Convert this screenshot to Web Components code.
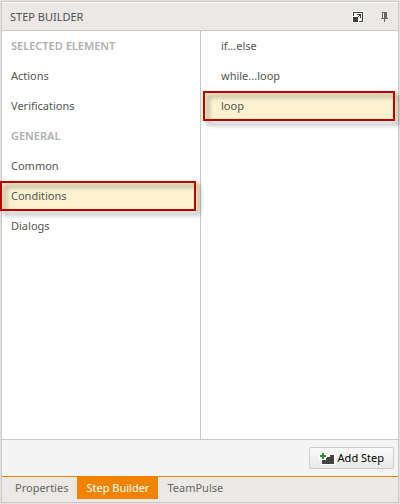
<!DOCTYPE html>
<html lang="en">
<head>
<meta charset="utf-8">
<title>Step Builder</title>
<style>
html, body { height: 100%; margin: 0; }
body { background: #e4e1df; font: 11px/16px "Noto Sans", "Open Sans", sans-serif; color: #555; }
</style>
</head>
<body>
<step-builder></step-builder>
<script>
const define = (name, html, setup) => customElements.define(name, class extends HTMLElement {
  connectedCallback() {
    if (this.shadowRoot) return;
    this.attachShadow({ mode: "open" }).innerHTML = html;
    if (setup) setup(this);
  }
});

define("panel-header", `
<style>
:host { display: flex; align-items: center; height: 27px; padding: 0 10px 0 8px; background: #ebe8e5; border-top: 1px solid #fff; border-bottom: 1px solid #c8c8c8; }
h1 { flex: 1; margin: 0; font-size: 11px; font-weight: 400; line-height: 16px; color: #505050; }
button { display: block; border: 0; padding: 0; background: none; }
button + button { margin-left: 17px; }
svg { display: block; }
</style>
<h1><slot></slot></h1>
<button type="button" aria-label="Undock"><svg width="12" height="12" shape-rendering="crispEdges"><path fill="#fff" d="M0 0h12v12H0z"/><path fill="#404040" d="M1 1h10v10H7v-1h3V2H2v3H1zM1 6h5v5H1zM5 3h4v4H8V5H7V4H5zM6 5h1v1H6z"/></svg></button>
<button type="button" aria-label="Pin"><svg width="7" height="10" shape-rendering="crispEdges"><path fill="#666" d="M1 0h5v6h1v1H4v3H3V7H0V6h1zM2 1v5h1V1z"/></svg></button>`);

define("list-heading", `
<style>
:host { display: block; }
h2 { margin: 0; padding: 7px 9px; font-size: 11px; line-height: 16px; font-weight: 600; color: #b0b0b0; }
</style><h2><slot></slot></h2>`);

define("list-item", `
<style>
:host { display: block; position: relative; }
button { display: block; width: 100%; border: 0; margin: 0; padding: 7px 9px; padding-left: var(--indent, 9px); background: none; font: inherit; color: inherit; text-align: left; }
:host([selected]) button { background: #fcf2cf; }
.mark { display: none; }
:host([selected]) .mark { display: block; position: absolute; z-index: 1; box-sizing: border-box; top: 0; bottom: 0; left: var(--mark-left); right: var(--mark-right); border: 2px solid #c00000; filter: drop-shadow(4px 4px 2px rgba(0,0,0,.4)); pointer-events: none; }
</style><button type="button"><slot></slot></button><span class="mark"></span>`);

define("add-button", `
<style>
:host { display: block; }
button { display: flex; align-items: center; gap: 3px; height: 22px; padding: 0 9px; border: 1px solid #ccc; border-radius: 2px; background: linear-gradient(#fafafa, #e9e9e9); font: inherit; font-size: 11px; color: #000; }
svg { display: block; }
</style>
<button type="button"><svg width="16" height="13" shape-rendering="crispEdges" aria-hidden="true"><path fill="#fff" d="M2 0h4v2h10v11H2V8H0V2h2z"/><path fill="#444" d="M11 3h4v9H3V8h4V5h4z"/><path fill="#fff" d="M2 0h4v2h2v4H6v2H2V6H0V2h2z"/><path fill="#2e8b2e" d="M3 1h2v2h2v2H5v2H3V5H1V3h2z"/></svg><slot></slot></button>`);

define("tab-item", `
<style>
:host { display: block; }
button { height: 22px; border: 0; margin: 0; padding: 0 9px; background: none; font: inherit; color: #666; display: block; }
:host([selected]) button { background: #f08400; color: #fff; }
</style><button type="button" role="tab"><slot></slot></button>`, el =>
  el.shadowRoot.querySelector("button").setAttribute("aria-selected", el.hasAttribute("selected")));

define("step-builder", `
<style>
:host { display: flex; flex-direction: column; box-sizing: border-box; height: 100%; padding: 1px; }
.panel { flex: 1; display: flex; flex-direction: column; border: 1px solid #c8c8c8; background: #fff; }
.columns { flex: 1; display: grid; grid-template-columns: 1fr 1fr; }
.left { --mark-left: -2px; --mark-right: 4px; }
.right { border-left: 1px solid #c8c8c8; --indent: 20px; --mark-left: 2px; --mark-right: 3px; }
.footer { display: flex; justify-content: flex-end; padding: 7px 4px; background: #f4f4f4; border-top: 1px solid #c8c8c8; }
.tabs { display: flex; padding: 0 4px 3px; background: #ebe8e5; border-top: 1px solid #f08400; }
</style>
<section class="panel">
<panel-header>STEP BUILDER</panel-header>
<div class="columns">
<nav class="left">
<list-heading>SELECTED ELEMENT</list-heading>
<list-item>Actions</list-item>
<list-item>Verifications</list-item>
<list-heading>GENERAL</list-heading>
<list-item>Common</list-item>
<list-item selected>Conditions</list-item>
<list-item>Dialogs</list-item>
</nav>
<div class="right">
<list-item>if...else</list-item>
<list-item>while...loop</list-item>
<list-item selected>loop</list-item>
</div>
</div>
<div class="footer"><add-button>Add Step</add-button></div>
<div class="tabs" role="tablist"><tab-item>Properties</tab-item><tab-item selected>Step Builder</tab-item><tab-item>TeamPulse</tab-item></div>
</section>`);
</script>
</body>
</html>
